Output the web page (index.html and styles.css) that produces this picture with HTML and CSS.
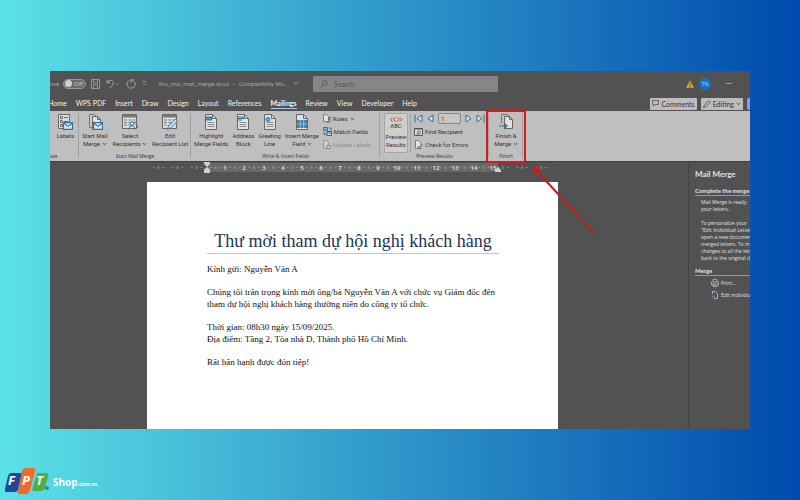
FILE: index.html
```html
<!DOCTYPE html>
<html lang="vi">
<head>
<meta charset="utf-8">
<meta name="viewport" content="width=device-width, initial-scale=1">
<title>Mail Merge</title>
<link rel="stylesheet" href="styles.css">
</head>
<body>
<svg class="defs" aria-hidden="true">
  <symbol id="sheet" viewBox="0 0 14 16">
    <path d="M1.500 .5h7l4 4v11h-11z" fill="#e2e2e2" stroke="#666"/>
    <path d="M8.500 .5v4h4" fill="none" stroke="#666"/>
    <path d="M3.500 8.500h7M3.500 10.500h7M3.500 12.500h7" stroke="#777" stroke-width=".8"/>
  </symbol>
  <symbol id="table" viewBox="0 0 16 16">
    <path d="M.5 .5h14v14H.5z" fill="#dcdcdc" stroke="#666"/>
    <path d="M.5 .5h14v3H.5z" fill="#777"/>
    <path d="M2 6h3M6.500 6h3M11 6h2.500M2 8.500h3M6.500 8.500h3M11 8.500h2.500M2 11h3M6.500 11h3" stroke="#777"/>
  </symbol>
  <symbol id="mail" viewBox="0 0 9 7">
    <path d="M.5 .5h8v6h-8z" fill="#d9e5ee" stroke="#33719f"/>
    <path d="M.5 .8l4 3 4-3" fill="none" stroke="#33719f"/>
  </symbol>
  <symbol id="caret" viewBox="0 0 5 4"><path d="M.8 1l1.700 1.700L4.200 1" fill="none" stroke="currentColor" stroke-width=".8"/></symbol>
</svg>

<main class="window">
  <header class="titlebar">
    <label class="autosave"><span>ave</span><input type="checkbox" class="switch-input"><span class="switch">Off</span></label>
    <div class="quick">
      <button aria-label="Save"><svg width="9" height="10" viewBox="0 0 9 10"><path d="M.5 .5h8v9h-8zM2.500 .5v3h4v-3M2.500 9.500v-4h4v4" fill="none" stroke="currentColor" stroke-width=".8"/></svg></button>
      <button aria-label="Undo"><svg width="14" height="10" viewBox="0 0 14 10"><path d="M1 .8v3h3M1.200 3.600C3 .8 7 .6 7.500 3.500 7.700 5.500 6 6.500 4 9M10.500 4.500l1 1 1-1" fill="none" stroke="currentColor"/></svg></button>
      <button aria-label="Redo"><svg width="10" height="10" viewBox="0 0 10 10"><path d="M8 .8H5v3M5.200 1.200C9.500 2 10.500 6 8 8 5 10.500 1 8.500 1 5c0-1.500.8-2.800 2-3.500" fill="none" stroke="currentColor"/></svg></button>
      <button aria-label="Customize"><svg width="5" height="5" viewBox="0 0 5 5"><path d="M.5 .6h4M1 2.500l1.500 1.500L4 2.500" fill="none" stroke="currentColor" stroke-width=".8"/></svg></button>
    </div>
    <div class="filename">thu_moi_mail_merge.docx &nbsp;–&nbsp; Compatibility Mo... <svg width="6" height="5" viewBox="0 0 5 4"><use href="#caret"/></svg></div>
    <label class="search"><svg width="8" height="8" viewBox="0 0 8 8"><circle cx="4.800" cy="3" r="2.400" fill="none" stroke="#555" stroke-width=".8"/><path d="M3.100 4.800L.6 7.400" stroke="#555"/></svg><input type="text" placeholder="Search" aria-label="Search"></label>
    <div class="account">
      <svg width="8" height="8" viewBox="0 0 8 8"><path d="M4 .2L7.900 7.800H.1z" fill="#e6a83e"/><path d="M4 2.500v3M4 6.200v1" stroke="#54401c"/></svg>
      <span class="avatar">TN</span>
      <button aria-label="Minimize" class="minimize"></button>
    </div>
  </header>

  <nav class="tabs">
    <a href="#" class="tab home">Home</a>
    <a href="#" class="tab">WPS PDF</a>
    <a href="#" class="tab">Insert</a>
    <a href="#" class="tab">Draw</a>
    <a href="#" class="tab">Design</a>
    <a href="#" class="tab">Layout</a>
    <a href="#" class="tab">References</a>
    <a href="#" class="tab active">Mailings</a>
    <a href="#" class="tab">Review</a>
    <a href="#" class="tab">View</a>
    <a href="#" class="tab">Developer</a>
    <a href="#" class="tab">Help</a>
    <div class="tab-actions">
      <button class="pill"><svg width="7" height="7" viewBox="0 0 7 7"><path d="M.5 .5h6v4H3L1.500 6.200V4.500h-1z" fill="none" stroke="#444" stroke-width=".7"/></svg>Comments</button>
      <button class="pill"><svg width="8" height="8" viewBox="0 0 8 8"><path d="M.6 7.400l.6-2.200L5.800.7l1.500 1.500-4.500 4.600z" fill="none" stroke="#444" stroke-width=".8"/></svg>Editing<svg width="5" height="4"><use href="#caret"/></svg></button>
      <button class="share" aria-label="Share"></button>
    </div>
  </nav>

  <section class="ribbon">
    <div class="group create">
      <div class="tools">
        <button class="tool"><svg width="16" height="16" viewBox="0 0 16 16"><path d="M1.500 .5h11v14h-11z" fill="#dcdcdc" stroke="#666"/><path d="M3.500 2.500h2v2h-2zM3.500 6.500h2v2h-2zM3.500 10.500h2v2h-2zM7 3.500h4M7 7.500h4" fill="none" stroke="#666"/><use href="#mail" x="6" y="8" width="10" height="8"/></svg><span>Labels</span></button>
      </div>
      <div class="caption">ate</div>
    </div>
    <div class="group start">
      <div class="tools">
        <button class="tool"><svg width="16" height="16" viewBox="0 0 16 16"><path d="M2.500 .5h5l3 3v10h-8z" fill="#ccc" stroke="#777"/><path d="M5.500 2.500h5l3 3v10h-8z" fill="#e2e2e2" stroke="#666"/><path d="M10.500 2.500v3h3" fill="none" stroke="#666"/><use href="#mail" x="6" y="8" width="10" height="8"/></svg><span>Start Mail<br>Merge <svg width="5" height="4"><use href="#caret"/></svg></span></button>
        <button class="tool"><svg width="16" height="16" viewBox="0 0 16 16"><use href="#table"/><circle cx="10" cy="9.500" r="1.800" fill="#d9e5ee" stroke="#33719f"/><path d="M7 15.500c0-5 6-5 6 0M12 8.500c2-1 3 1 2 2.500 1 0 1.500 1.500 1.500 3" fill="none" stroke="#33719f"/></svg><span>Select<br>Recipients <svg width="5" height="4"><use href="#caret"/></svg></span></button>
        <button class="tool"><svg width="16" height="16" viewBox="0 0 16 16"><use href="#table"/><path d="M5.500 15.500l1-3.500 7-7 2 2-7 7z" fill="#d9e5ee" stroke="#33719f"/></svg><span>Edit<br>Recipient List</span></button>
      </div>
      <div class="caption">Start Mail Merge</div>
    </div>
    <div class="group write">
      <div class="tools">
        <button class="tool"><svg width="14" height="16" viewBox="0 0 14 16"><use href="#sheet"/><path d="M1.500 3h6v3h-6z" fill="#5b8fb5" stroke="#33719f"/></svg><span>Highlight<br>Merge Fields</span></button>
        <button class="tool"><svg width="14" height="16" viewBox="0 0 14 16"><use href="#sheet"/><path d="M2 3h6M2 4.500h6M2 6h4" stroke="#33719f" stroke-width="1.200"/></svg><span>Address<br>Block</span></button>
        <button class="tool"><svg width="14" height="16" viewBox="0 0 14 16"><use href="#sheet"/><circle cx="5" cy="5.500" r="2" fill="#7aa5c5" stroke="#33719f"/><path d="M1.500 4.500v2" stroke="#33719f"/></svg><span>Greeting<br>Line</span></button>
        <button class="tool"><svg width="14" height="16" viewBox="0 0 14 16"><use href="#sheet"/><path d="M2 6h10v8H2z" fill="#3f83b5"/><path d="M2 10h10M5.300 6v8M8.700 6v8" stroke="#a9c5d9" stroke-width=".8"/></svg><span>Insert Merge<br>Field <svg width="5" height="4"><use href="#caret"/></svg></span></button>
        <div class="stack">
          <button class="row"><svg width="8" height="9" viewBox="0 0 8 9"><path d="M.5 .5h3l2 2v5h-5z" fill="#e2e2e2" stroke="#666" stroke-width=".8"/><path d="M4 8.500c4 0 4-3 2-4.500M6 6V3.700h2" fill="none" stroke="#33719f"/></svg>Rules<svg width="5" height="4"><use href="#caret"/></svg></button>
          <button class="row"><svg width="9" height="9" viewBox="0 0 9 9"><path d="M.5 .5h4v3h-4z" fill="#88adc8" stroke="#33719f"/><path d="M4 4.500h4.500v4H4z" fill="#e2e2e2" stroke="#555"/><path d="M6 1h2v2.500M1 5v2.500h2M4 6h4" fill="none" stroke="#33719f"/></svg>Match Fields</button>
          <button class="row" disabled><svg width="8" height="9" viewBox="0 0 8 9"><path d="M.5 .5h3l2 2v6h-5z" fill="#ccc" stroke="#8a8a8a" stroke-width=".8"/><path d="M4 5.500h3.500v3H4z" fill="#ccc" stroke="#8a8a8a"/></svg>Update Labels</button>
        </div>
      </div>
      <div class="caption">Write &amp; Insert Fields</div>
    </div>
    <div class="group preview">
      <div class="tools">
        <button class="tool pressed"><svg width="14" height="5" viewBox="0 0 14 5"><path d="M3.500 .5l-2 2 2 2M6.500 .5l-2 2 2 2M8 .5l2 2-2 2M11 .5l2 2-2 2" fill="none" stroke="#b83a3a"/></svg><span class="abc">ABC</span><span>Preview<br>Results</span></button>
        <div class="stack divided">
          <div class="records">
            <button aria-label="First"><svg width="9" height="9" viewBox="0 0 9 9"><path d="M1 .5v8M8 1v7L3 4.500z" fill="#dce6ed" stroke="#2d6a99"/></svg></button>
            <button aria-label="Previous"><svg width="7" height="9" viewBox="0 0 7 9"><path d="M6 1v7L1 4.500z" fill="#dce6ed" stroke="#2d6a99"/></svg></button>
            <input type="text" value="1" aria-label="Record">
            <button aria-label="Next"><svg width="7" height="9" viewBox="0 0 7 9"><path d="M1 1v7l5-3.500z" fill="#dce6ed" stroke="#2d6a99"/></svg></button>
            <button aria-label="Last"><svg width="9" height="9" viewBox="0 0 9 9"><path d="M8 .5v8M1 1v7l5-3.500z" fill="#dce6ed" stroke="#2d6a99"/></svg></button>
          </div>
          <button class="row"><svg width="9" height="8" viewBox="0 0 9 8"><path d="M.5 .5h8v7h-8z" fill="#ddd" stroke="#555"/><path d="M0 1h9" stroke="#555"/><circle cx="5" cy="4.500" r="1.500" fill="none" stroke="#2d6a99"/><path d="M3.800 5.600L2.500 7" stroke="#2d6a99"/></svg>Find Recipient</button>
          <button class="row"><svg width="9" height="9" viewBox="0 0 9 9"><path d="M1.500 .5h3l2.500 2.500v5.500H1.500z" fill="#e2e2e2" stroke="#666" stroke-width=".8"/><path d="M3.500 6l1.500 2 3-4" fill="none" stroke="#3c8259"/></svg>Check for Errors</button>
        </div>
      </div>
      <div class="caption">Preview Results</div>
    </div>
    <div class="group finish">
      <div class="tools">
        <button class="tool"><svg width="16" height="16" viewBox="0 0 16 16"><path d="M3.500 9V.5h6l2 2" fill="none" stroke="#777"/><path d="M6.500 2.500h5l3 3v9h-8z" fill="#e2e2e2" stroke="#666"/><path d="M11.500 2.500v3h3" fill="none" stroke="#666"/><path d="M1 12h8M6 9l3 3-3 3" fill="none" stroke="#33719f" stroke-width="1.200"/></svg><span>Finish &amp;<br>Merge <svg width="5" height="4"><use href="#caret"/></svg></span></button>
      </div>
      <div class="caption">Finish</div>
      <div class="highlight"></div>
      <svg class="arrow" width="64" height="70" viewBox="0 0 64 70"><path d="M4 5L62 68" stroke="#bb2020" stroke-width="2"/><path d="M0 0l9 5-6 5z" fill="#d11a1a"/></svg>
    </div>
  </section>

  <div class="workspace">
    <section class="editor">
      <svg class="ruler" width="508" height="11" aria-hidden="true">
        <defs>
          <pattern id="ticks" x="156.200" width="19.140" height="11" patternUnits="userSpaceOnUse">
            <path d="M4.300 5.500h1M13.900 5.500h1" stroke="#b5b5b5"/>
            <path d="M9.600 4v3" stroke="#b5b5b5" stroke-width=".8"/>
          </pattern>
        </defs>
        <path d="M157 1h291v9H157z" fill="#686868"/>
        <path d="M99 0h406v11H99z" fill="url(#ticks)"/>
        <g class="ruler-numbers">
          <text x="175" y="8">1</text><text x="194" y="8">2</text><text x="214" y="8">3</text><text x="233" y="8">4</text><text x="252" y="8">5</text><text x="271" y="8">6</text><text x="290" y="8">7</text><text x="309" y="8">8</text><text x="328" y="8">9</text><text x="347" y="8">10</text><text x="367" y="8">11</text><text x="386" y="8">12</text><text x="405" y="8">13</text><text x="424" y="8">14</text><text x="443" y="8">15</text>
        </g>
        <path d="M154 0h6v2l-3 3 3 2.500V11h-6V7.500l3-2.500-3-3zM445 10V8l3-3 3 3v2z" fill="#d0d0d0"/>
      </svg>
      <article class="page">
        <h1>Thư mời tham dự hội nghị khách hàng</h1>
        <p>Kính gửi: Nguyễn Văn A</p>
        <p>Chúng tôi trân trọng kính mời ông/bà Nguyễn Văn A với chức vụ Giám đốc đến<br>tham dự hội nghị khách hàng thường niên do công ty tổ chức.</p>
        <p>Thời gian: 08h30 ngày 15/09/2025.<br>Địa điểm: Tầng 2, Tòa nhà D, Thành phố Hồ Chí Minh.</p>
        <p>Rất hân hạnh được đón tiếp!</p>
      </article>
    </section>
    <aside class="pane">
      <h2>Mail Merge</h2>
      <h3>Complete the merge</h3>
      <p>Mail Merge is ready<br>your letters.</p>
      <p>To personalize your<br>"Edit Individual Letters<br>open a new document<br>merged letters. To m<br>changes to all the lett<br>back to the original d</p>
      <h3>Merge</h3>
      <a href="#"><svg width="8" height="8" viewBox="0 0 8 8"><path d="M2 3V.5h4V3M.5 3h7v3h-7zM2 5h4v2.500H2z" fill="none" stroke="#bbb" stroke-width=".8"/><path d="M4 6h3.500" stroke="#4b8dbd"/></svg>Print...</a>
      <a href="#"><svg width="8" height="8" viewBox="0 0 8 8"><path d="M1.500 3V.5h3l2 2v5H3" fill="none" stroke="#ccc" stroke-width=".8"/><path d="M.5 5.500h3M2 4l1.500 1.500L2 7" fill="none" stroke="#4b8dbd"/></svg>Edit individual</a>
    </aside>
  </div>
</main>

<footer class="brand">
  <svg width="46" height="27" viewBox="0 0 46 27" role="img" aria-label="FPT">
    <path d="M6 5h11l-4 17q-1 2-3 2H1q-2 0-1-3L3 8q1-3 3-3z" fill="#20479a"/>
    <path d="M32 5h9q3 0 2 3l-3 12q-1 3-4 3h-9z" fill="#4fae48"/>
    <path d="M20 0h9q2 0 1 3l-5 19q-1 4-4 4h-7q-2 0-1-3L17 3q1-3 3-3z" fill="#ee6b28"/>
    <circle cx="42" cy="20" r="2" fill="#2c7fc0"/>
    <g class="logo-letters"><text x="3" y="17">F</text><text x="17" y="17">P</text><text x="31" y="17">T</text></g>
  </svg>
  <span class="shop">Shop<small>.com.vn</small></span>
</footer>
</body>
</html>
```
FILE: styles.css
```css
* { box-sizing: border-box; }

body {
  margin: 0;
  min-height: 100vh;
  display: flex;
  flex-direction: column;
  padding-top: 71px;
  background: linear-gradient(90deg, #5ce1e6, #004aad);
  font-family: Lato, "Open Sans", sans-serif;
  font-size: 7px;
  line-height: 8px;
  color: #333;
}

h1, h2, h3, p { margin: 0; }
svg { flex: none; }
a { color: inherit; text-decoration: none; }
.defs { position: absolute; width: 0; height: 0; }

button {
  display: flex;
  align-items: center;
  padding: 0;
  border: 0;
  background: none;
  color: inherit;
  font: inherit;
  white-space: nowrap;
}

input { font: inherit; color: inherit; }

.window {
  flex: 1;
  display: flex;
  flex-direction: column;
  margin: 0 50px;
  overflow: hidden;
  background: #525252;
}

/* Title bar */
.titlebar {
  position: relative;
  display: flex;
  align-items: center;
  height: 25px;
  color: #a6a6a6;
}
.autosave { display: flex; align-items: center; gap: 4px; font-size: 6px; }
.switch-input { position: absolute; opacity: 0; width: 1px; height: 1px; margin: 0; }
.switch {
  display: flex;
  align-items: center;
  gap: 2px;
  width: 23px;
  height: 10px;
  padding-left: 1px;
  border: 1px solid #999;
  border-radius: 5px;
  background: #6c6c6c;
  color: #c8c8c8;
}
.switch::before { content: ""; flex: none; width: 7px; height: 7px; border-radius: 50%; background: #d0d0d0; }
.quick { display: flex; align-items: center; gap: 6px; margin-left: 5px; }
.filename {
  display: flex;
  align-items: center;
  gap: 3px;
  width: 154px;
  margin-left: 12px;
  font-family: Roboto, sans-serif;
  font-size: 6px;
  white-space: pre;
}
.search {
  display: flex;
  align-items: center;
  gap: 6px;
  width: 185px;
  height: 16px;
  padding: 0 7px;
  border-radius: 1px;
  background: #868686;
}
.search input { flex: 1; min-width: 0; padding: 0; border: 0; background: none; }
.search input::placeholder { color: #555; opacity: 1; }
.account { display: flex; align-items: center; gap: 5px; margin-left: auto; padding-right: 18px; }
.avatar {
  width: 12px;
  height: 12px;
  border-radius: 50%;
  background: #0f75c4;
  color: #c5dcef;
  font-size: 5px;
  line-height: 12px;
  text-align: center;
}
.minimize { width: 6px; height: 1px; margin-left: 10px; background: #999; }

/* Ribbon tabs */
.tabs {
  display: flex;
  align-items: center;
  gap: 9px;
  height: 15px;
  color: #f2f2f2;
}
.tab { padding-bottom: 1px; border-bottom: 1px solid transparent; white-space: nowrap; }
.home { margin-left: -2px; }
.active { border-color: #b5c7ec; font-weight: 700; }
.tab-actions { display: flex; gap: 4px; margin-left: auto; }
.pill {
  gap: 2px;
  height: 12px;
  padding: 0 2px;
  border-radius: 1px;
  background: #bdbdbd;
  color: #333;
}
.share { width: 3px; height: 12px; border-radius: 2px 0 0 2px; background: #7ba3e8; }

/* Ribbon */
.ribbon {
  display: flex;
  height: 50px;
  background: #bfbfbf;
  font-family: Roboto, sans-serif;
  font-size: 6px;
}
.group {
  position: relative;
  flex: none;
  display: flex;
  flex-direction: column;
  justify-content: space-between;
  padding: 3px 0 1px;
}
.group::after {
  content: "";
  position: absolute;
  right: 0;
  top: 2px;
  bottom: 3px;
  width: 1px;
  background: #a0a0a0;
}
.create { width: 29px; }
.start { width: 112px; }
.write { width: 189px; }
.preview { width: 109px; }
.finish { width: 34px; }
.tools { display: flex; justify-content: center; gap: 5px; }
.create .tools { justify-content: flex-end; padding-right: 5px; }
.write .tools { gap: 4px; padding-right: 6px; }
.preview .tools { gap: 2px; justify-content: flex-start; padding-left: 4px; }
.tool { flex-direction: column; gap: 2px; line-height: 8px; text-align: center; }
.tool span svg { vertical-align: middle; }
.caption { font-family: "Open Sans", sans-serif; font-size: 5px; line-height: 8px; text-align: center; color: #333; }
.create .caption { text-align: left; }
.pressed {
  width: 24px;
  height: 40px;
  margin: -1px 0;
  padding-top: 3px;
  justify-content: flex-start;
  gap: 0;
  border: 1px solid #a5a5a5;
  border-radius: 2px;
  background: #cecece;
}
.abc { margin-bottom: 4px; line-height: 7px; }
.stack { display: flex; flex-direction: column; gap: 4px; }
.divided { padding-left: 3px; border-left: 1px solid #a0a0a0; }
.row { gap: 2px; height: 9px; }
.row:disabled { color: #8f8f8f; }
.records { display: flex; align-items: center; gap: 4px; height: 9px; }
.records input {
  width: 23px;
  height: 11px;
  padding: 0 2px;
  border: 1px solid #888;
  border-radius: 2px;
  background: #c6c6c6;
}
.highlight {
  position: absolute;
  inset: -1px -3px -2px -3px;
  z-index: 1;
  border: 2px solid #cf1d1d;
}
.arrow { position: absolute; left: 43px; top: 54px; z-index: 2; }

/* Document area */
.workspace { flex: 1; display: flex; border-top: 1px solid #404040; }
.editor { flex: 1; min-width: 0; display: flex; flex-direction: column; }
.ruler { display: block; }
.ruler-numbers { font: 700 6px "Open Sans", sans-serif; fill: #d8d8d8; text-anchor: middle; }
.page {
  flex: 1;
  width: 411px;
  margin: 9px 0 0 97px;
  padding: 47px 59px 0 60px;
  background: #fff;
  color: #111;
  font-family: "Liberation Serif", serif;
  font-size: 9px;
  line-height: 12px;
}
.page h1 {
  margin-bottom: 9px;
  border-bottom: 1px solid #b9c6d3;
  color: #1c3553;
  font-size: 18px;
  font-weight: 400;
  line-height: 24px;
  text-align: center;
  white-space: nowrap;
}
.page p { margin-bottom: 11px; white-space: nowrap; }

/* Task pane */
.pane {
  width: 62px;
  padding: 7px 0 0 6px;
  overflow: hidden;
  border-left: 1px solid #444;
  color: #e2e2e2;
  font-family: "Open Sans", sans-serif;
  font-size: 5px;
  line-height: 7px;
  white-space: nowrap;
}
.pane h2 { margin-bottom: 8px; font: 700 8px/10px Lato, sans-serif; }
.pane h3 { margin-bottom: 3px; border-bottom: 1px solid #999; font: 700 6px/8px Lato, sans-serif; }
.pane p { margin: 0 0 7px 6px; }
.pane p + h3 { margin-top: -2px; }
.pane a { display: flex; align-items: center; gap: 2px; margin: 0 0 4px 16px; }

/* Brand */
.brand { display: flex; align-items: center; gap: 2px; height: 71px; padding: 34px 0 0 5px; color: #fff; }
.logo-letters { fill: #fff; font: italic 700 13px "Open Sans", sans-serif; }
.shop { font: 700 10px "Open Sans", sans-serif; }
.shop small { font-size: 5px; }
```
